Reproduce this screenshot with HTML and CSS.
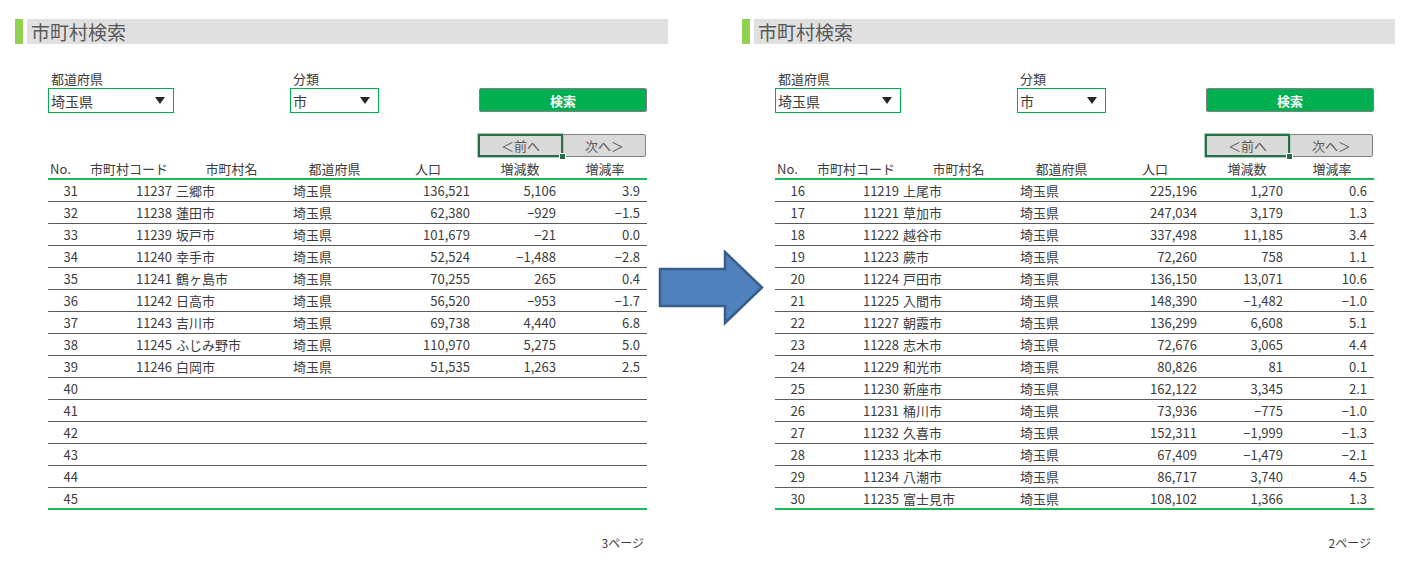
FILE: index.html
```html
<!DOCTYPE html>
<html lang="ja">
  <head>
    <meta charset="UTF-8" />
    <title>市町村検索</title>
    <link rel="stylesheet" href="styles.css">
  </head>
  <body>
    <div class="sheet">
      <section class="panel">
        <div class="title"><span class="title-mark"></span><h1>市町村検索</h1></div>
        <div class="body">
          <div class="filters">
            <div class="field">
              <div class="label">都道府県</div>
              <div class="select select-wide">埼玉県<span class="caret"></span></div>
            </div>
            <div class="field">
              <div class="label">分類</div>
              <div class="select select-narrow">市<span class="caret"></span></div>
            </div>
            <button class="search">検索</button>
          </div>
          <div class="pager">
            <button class="page-btn prev">＜前へ</button>
            <button class="page-btn next">次へ＞</button>
          </div>
          <div class="list">
            <div class="row head">
              <span class="h-no">No.</span><span>市町村コード</span><span>市町村名</span><span>都道府県</span><span>人口</span><span>増減数</span><span>増減率</span>
            </div>
            <div class="row"><span class="num">31</span><span class="code">11237</span><span class="txt">三郷市</span><span class="txt">埼玉県</span><span class="num">136,521</span><span class="num">5,106</span><span class="num">3.9</span></div>
            <div class="row"><span class="num">32</span><span class="code">11238</span><span class="txt">蓮田市</span><span class="txt">埼玉県</span><span class="num">62,380</span><span class="num">−929</span><span class="num">−1.5</span></div>
            <div class="row"><span class="num">33</span><span class="code">11239</span><span class="txt">坂戸市</span><span class="txt">埼玉県</span><span class="num">101,679</span><span class="num">−21</span><span class="num">0.0</span></div>
            <div class="row"><span class="num">34</span><span class="code">11240</span><span class="txt">幸手市</span><span class="txt">埼玉県</span><span class="num">52,524</span><span class="num">−1,488</span><span class="num">−2.8</span></div>
            <div class="row"><span class="num">35</span><span class="code">11241</span><span class="txt">鶴ヶ島市</span><span class="txt">埼玉県</span><span class="num">70,255</span><span class="num">265</span><span class="num">0.4</span></div>
            <div class="row"><span class="num">36</span><span class="code">11242</span><span class="txt">日高市</span><span class="txt">埼玉県</span><span class="num">56,520</span><span class="num">−953</span><span class="num">−1.7</span></div>
            <div class="row"><span class="num">37</span><span class="code">11243</span><span class="txt">吉川市</span><span class="txt">埼玉県</span><span class="num">69,738</span><span class="num">4,440</span><span class="num">6.8</span></div>
            <div class="row"><span class="num">38</span><span class="code">11245</span><span class="txt">ふじみ野市</span><span class="txt">埼玉県</span><span class="num">110,970</span><span class="num">5,275</span><span class="num">5.0</span></div>
            <div class="row"><span class="num">39</span><span class="code">11246</span><span class="txt">白岡市</span><span class="txt">埼玉県</span><span class="num">51,535</span><span class="num">1,263</span><span class="num">2.5</span></div>
            <div class="row"><span class="num">40</span></div>
            <div class="row"><span class="num">41</span></div>
            <div class="row"><span class="num">42</span></div>
            <div class="row"><span class="num">43</span></div>
            <div class="row"><span class="num">44</span></div>
            <div class="row"><span class="num">45</span></div>
          </div>
          <div class="page-no">3ページ</div>
        </div>
      </section>

      <section class="panel">
        <div class="title"><span class="title-mark"></span><h1>市町村検索</h1></div>
        <div class="body">
          <div class="filters">
            <div class="field">
              <div class="label">都道府県</div>
              <div class="select select-wide">埼玉県<span class="caret"></span></div>
            </div>
            <div class="field">
              <div class="label">分類</div>
              <div class="select select-narrow">市<span class="caret"></span></div>
            </div>
            <button class="search">検索</button>
          </div>
          <div class="pager">
            <button class="page-btn prev">＜前へ</button>
            <button class="page-btn next">次へ＞</button>
          </div>
          <div class="list">
            <div class="row head">
              <span class="h-no">No.</span><span>市町村コード</span><span>市町村名</span><span>都道府県</span><span>人口</span><span>増減数</span><span>増減率</span>
            </div>
            <div class="row"><span class="num">16</span><span class="code">11219</span><span class="txt">上尾市</span><span class="txt">埼玉県</span><span class="num">225,196</span><span class="num">1,270</span><span class="num">0.6</span></div>
            <div class="row"><span class="num">17</span><span class="code">11221</span><span class="txt">草加市</span><span class="txt">埼玉県</span><span class="num">247,034</span><span class="num">3,179</span><span class="num">1.3</span></div>
            <div class="row"><span class="num">18</span><span class="code">11222</span><span class="txt">越谷市</span><span class="txt">埼玉県</span><span class="num">337,498</span><span class="num">11,185</span><span class="num">3.4</span></div>
            <div class="row"><span class="num">19</span><span class="code">11223</span><span class="txt">蕨市</span><span class="txt">埼玉県</span><span class="num">72,260</span><span class="num">758</span><span class="num">1.1</span></div>
            <div class="row"><span class="num">20</span><span class="code">11224</span><span class="txt">戸田市</span><span class="txt">埼玉県</span><span class="num">136,150</span><span class="num">13,071</span><span class="num">10.6</span></div>
            <div class="row"><span class="num">21</span><span class="code">11225</span><span class="txt">入間市</span><span class="txt">埼玉県</span><span class="num">148,390</span><span class="num">−1,482</span><span class="num">−1.0</span></div>
            <div class="row"><span class="num">22</span><span class="code">11227</span><span class="txt">朝霞市</span><span class="txt">埼玉県</span><span class="num">136,299</span><span class="num">6,608</span><span class="num">5.1</span></div>
            <div class="row"><span class="num">23</span><span class="code">11228</span><span class="txt">志木市</span><span class="txt">埼玉県</span><span class="num">72,676</span><span class="num">3,065</span><span class="num">4.4</span></div>
            <div class="row"><span class="num">24</span><span class="code">11229</span><span class="txt">和光市</span><span class="txt">埼玉県</span><span class="num">80,826</span><span class="num">81</span><span class="num">0.1</span></div>
            <div class="row"><span class="num">25</span><span class="code">11230</span><span class="txt">新座市</span><span class="txt">埼玉県</span><span class="num">162,122</span><span class="num">3,345</span><span class="num">2.1</span></div>
            <div class="row"><span class="num">26</span><span class="code">11231</span><span class="txt">桶川市</span><span class="txt">埼玉県</span><span class="num">73,936</span><span class="num">−775</span><span class="num">−1.0</span></div>
            <div class="row"><span class="num">27</span><span class="code">11232</span><span class="txt">久喜市</span><span class="txt">埼玉県</span><span class="num">152,311</span><span class="num">−1,999</span><span class="num">−1.3</span></div>
            <div class="row"><span class="num">28</span><span class="code">11233</span><span class="txt">北本市</span><span class="txt">埼玉県</span><span class="num">67,409</span><span class="num">−1,479</span><span class="num">−2.1</span></div>
            <div class="row"><span class="num">29</span><span class="code">11234</span><span class="txt">八潮市</span><span class="txt">埼玉県</span><span class="num">86,717</span><span class="num">3,740</span><span class="num">4.5</span></div>
            <div class="row"><span class="num">30</span><span class="code">11235</span><span class="txt">富士見市</span><span class="txt">埼玉県</span><span class="num">108,102</span><span class="num">1,366</span><span class="num">1.3</span></div>
          </div>
          <div class="page-no">2ページ</div>
        </div>
      </section>

      <svg class="arrow" width="107" height="76" viewBox="0 0 107 76">
        <polygon points="2,19 67,19 67,2 104,37.5 67,73 67,56 2,56" fill="#4f81bd" stroke="#385d8a" stroke-width="2.5" stroke-linejoin="miter" />
      </svg>
    </div>
  </body>
</html>
```

FILE: styles.css
```css
body {
  margin: 0;
  background: #fff;
  color: #3c3c3c;
  font-family: "Noto Sans CJK JP", sans-serif;
}
.sheet {
  position: relative;
  display: flex;
  gap: 74px;
  padding: 19px 0 0 15px;
}
.panel {
  width: 653px;
}
.title {
  display: flex;
  gap: 4px;
  height: 25px;
}
.title-mark {
  width: 8px;
  background: #92d050;
}
.title h1 {
  flex: 1;
  margin: 0;
  padding-left: 4px;
  background: #e0e0e0;
  color: #595959;
  font-size: 19px;
  font-weight: normal;
  line-height: 25px;
}
.body {
  padding: 0 21px 0 33px;
}
.filters {
  display: grid;
  grid-template-columns: 242px 189px 168px;
  margin-top: 26px;
}
.field {
  display: flex;
  flex-direction: column;
  align-items: flex-start;
}
.label {
  padding-left: 3px;
  margin-bottom: 1px;
  font-size: 13px;
  line-height: 17px;
}
.select {
  box-sizing: border-box;
  height: 25px;
  display: flex;
  align-items: center;
  justify-content: space-between;
  padding: 0 8px 0 2px;
  border: 1px solid #00b050;
  font-size: 14px;
}
.select-wide {
  width: 126px;
}
.select-narrow {
  width: 89px;
}
.caret {
  width: 0;
  height: 0;
  border-left: 5px solid transparent;
  border-right: 5px solid transparent;
  border-top: 7px solid #262626;
}
.search {
  align-self: end;
  height: 24px;
  margin-bottom: 1px;
  padding: 0;
  background: #00b050;
  border: 1px solid #7f7f7f;
  border-radius: 2px;
  color: #fff;
  font-family: inherit;
  font-size: 13px;
  font-weight: bold;
}
.pager {
  display: flex;
  justify-content: flex-end;
  margin-top: 21px;
  padding-right: 1px;
}
.page-btn {
  box-sizing: border-box;
  height: 23px;
  padding: 0;
  background: #d9d9d9;
  color: #595959;
  font-family: inherit;
  font-size: 13px;
}
.prev {
  position: relative;
  width: 85px;
  border: 2px solid #2a6e48;
  box-shadow: 0 0 0 1px #a9cdb6;
}
.prev::after {
  content: "";
  position: absolute;
  right: -5px;
  bottom: -5px;
  width: 5px;
  height: 5px;
  background: #2a6e48;
  border: 1px solid #fff;
}
.next {
  width: 83px;
  border: 1px solid #7f7f7f;
  border-radius: 2px;
}
.row {
  box-sizing: border-box;
  display: grid;
  grid-template-columns: 37px 88px 117px 89px 98px 86px 84px;
  align-items: center;
  height: 22px;
  border-bottom: 1px solid #595959;
  font-size: 13px;
  white-space: nowrap;
}
.row:last-child,
.row.head {
  border-bottom: 2px solid #1fb55a;
}
.head {
  margin-top: 1px;
  text-align: center;
  color: #404040;
}
.head .h-no {
  text-align: left;
  padding-left: 2px;
}
.num {
  text-align: right;
  padding-right: 7px;
}
.code {
  text-align: right;
  padding-right: 1px;
}
.txt {
  padding-left: 3px;
}
.page-no {
  margin-top: 26px;
  padding-right: 3px;
  text-align: right;
  font-size: 12px;
  line-height: 14px;
}
.arrow {
  position: absolute;
  left: 658px;
  top: 250px;
}
```
